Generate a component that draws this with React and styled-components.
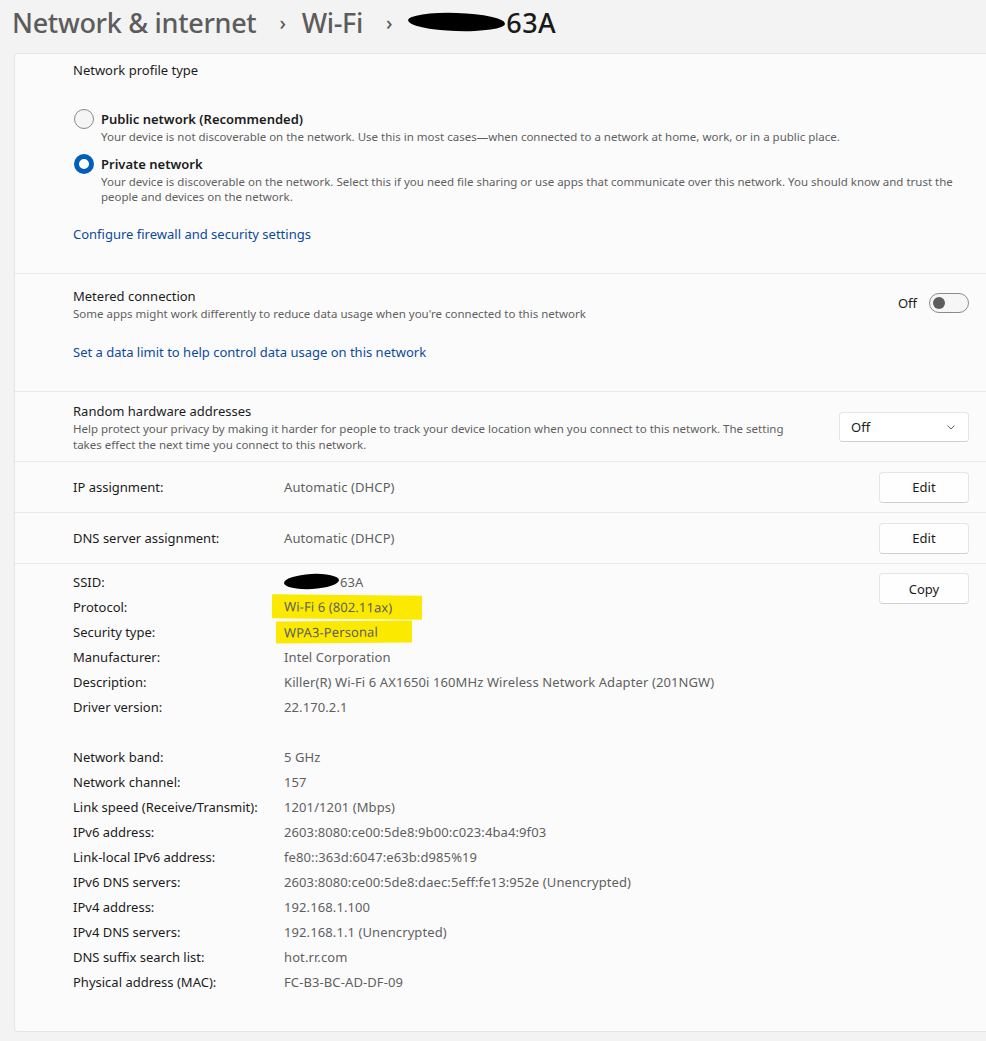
import React from 'react';
import styled, { createGlobalStyle } from 'styled-components';

const GlobalStyle = createGlobalStyle`
    html, body {
        margin: 0;
        padding: 0;
        background: #f3f3f3;
        overflow: hidden;
    }
    body {
        font-family: "Noto Sans", "Open Sans", sans-serif;
        color: #1b1b1b;
        -webkit-font-smoothing: antialiased;
    }
`;

const text = '#1b1b1b';
const muted = '#5f5f5f';
const link = '#0b4a9c';
const line = '#e8e8e8';

const Page = styled.div`
    padding-left: 14px;
    width: 1000px;
`;

const Header = styled.h1`
    display: flex;
    align-items: center;
    height: 44px;
    margin: 0 0 9px -2px;
    padding: 0;
    font-size: 27px;
    font-weight: 500;
    letter-spacing: -0.3px;
    color: #5c5c5c;
    white-space: nowrap;
`;

const Crumb = styled.span`
    color: ${p => (p.$current ? '#1a1a1a' : '#5c5c5c')};
    display: inline-flex;
    align-items: center;
    letter-spacing: ${p => (p.$current ? '0.4px' : 'inherit')};
`;

const Sep = styled.span`
    font-size: 20px;
    margin: 0 16px 0 23px;
    color: #5c5c5c;
`;

const Blot = styled.span`
    display: inline-block;
    width: ${p => p.$w}px;
    height: ${p => p.$h}px;
    background: #000;
    border-radius: 50%;
    transform: rotate(${p => p.$rot || 0}deg);
    margin-right: 1px;
`;

const Card = styled.div`
    width: 986px;
    background: #fbfbfb;
    border: 1px solid #e5e5e5;
    border-right: none;
    border-radius: 4px 0 0 4px;
`;

const Section = styled.div`
    padding: ${p => p.$pad || '0'};
    padding-left: 58px;
    padding-right: 32px;
    border-bottom: ${p => (p.$last ? 'none' : `1px solid ${line}`)};
`;

const Row = styled.div`
    display: flex;
    align-items: ${p => p.$align || 'center'};
    justify-content: space-between;
    min-height: ${p => p.$h || 0}px;
`;

const Title = styled.div`
    font-size: 13px;
    line-height: 20px;
    color: ${text};
    font-weight: ${p => (p.$bold ? 600 : 400)};
`;

const Desc = styled.div`
    font-size: 11.5px;
    line-height: 15.5px;
    color: ${muted};
    max-width: ${p => p.$max || 'none'};
`;

const Link = styled.a`
    display: block;
    font-size: 13px;
    line-height: 20px;
    color: ${link};
    text-decoration: none;
    margin-top: ${p => p.$mt}px;
`;

const RadioList = styled.div`
    display: flex;
    flex-direction: column;
    gap: 9px;
    margin-top: 29px;
`;

const RadioItem = styled.label`
    display: grid;
    grid-template-columns: 28px 1fr;
    align-items: start;
`;

const RadioDot = styled.span`
    box-sizing: border-box;
    width: 20px;
    height: 20px;
    margin-left: 1px;
    border-radius: 50%;
    background: ${p => (p.$on ? '#ffffff' : '#f5f5f5')};
    border: ${p => (p.$on ? '5px solid #005fb8' : '1px solid #8a8a8a')};
`;

const Control = styled.div`
    display: flex;
    align-items: center;
    gap: 12px;
    font-size: 13px;
    color: ${text};
`;

const Toggle = styled.span`
    box-sizing: border-box;
    display: flex;
    align-items: center;
    width: 40px;
    height: 20px;
    border: 1px solid #8a8a8a;
    border-radius: 10px;
    background: #f6f6f6;
    padding-left: 3px;
    &::after {
        content: '';
        width: 12px;
        height: 12px;
        border-radius: 50%;
        background: #5d5d5d;
    }
`;

const Select = styled.div`
    box-sizing: border-box;
    display: flex;
    align-items: center;
    justify-content: space-between;
    width: 130px;
    height: 30px;
    padding: 0 12px 0 11px;
    background: #ffffff;
    border: 1px solid #e5e5e5;
    border-bottom-color: #d0d0d0;
    border-radius: 4px;
    font-size: 13px;
    color: ${text};
    flex-shrink: 0;
`;

const Button = styled.button`
    box-sizing: border-box;
    width: 90px;
    height: 31px;
    margin-top: ${p => p.$mt || 0}px;
    background: #fefefe;
    border: 1px solid #e5e5e5;
    border-bottom-color: #d0d0d0;
    border-radius: 4px;
    font-family: inherit;
    font-size: 13px;
    color: ${text};
    flex-shrink: 0;
`;

const Prop = styled.div`
    display: grid;
    grid-template-columns: 211px 1fr;
    align-items: center;
    height: 25px;
    font-size: 13px;
`;

const PropLabel = styled.span`
    color: ${text};
`;

const PropValue = styled.span`
    color: ${muted};
    display: inline-flex;
    align-items: center;
    letter-spacing: 0.1px;
`;

const Marker = styled.span`
    background: #fbe900;
    padding: ${p => p.$pad};
    margin: ${p => p.$m};
    transform: rotate(${p => p.$rot}deg);
`;

const Chevron = () => (
    <svg width="10" height="10" viewBox="0 0 10 10">
        <path d="M1.5 3.5 L5 7 L8.5 3.5" fill="none" stroke="#5f5f5f" strokeWidth="1" />
    </svg>
);

const properties = [
    ['Manufacturer:', 'Intel Corporation'],
    ['Description:', 'Killer(R) Wi-Fi 6 AX1650i 160MHz Wireless Network Adapter (201NGW)'],
    ['Driver version:', '22.170.2.1'],
    ['', ''],
    ['Network band:', '5 GHz'],
    ['Network channel:', '157'],
    ['Link speed (Receive/Transmit):', '1201/1201 (Mbps)'],
    ['IPv6 address:', '2603:8080:ce00:5de8:9b00:c023:4ba4:9f03'],
    ['Link-local IPv6 address:', 'fe80::363d:6047:e63b:d985%19'],
    ['IPv6 DNS servers:', '2603:8080:ce00:5de8:daec:5eff:fe13:952e (Unencrypted)'],
    ['IPv4 address:', '192.168.1.100'],
    ['IPv4 DNS servers:', '192.168.1.1 (Unencrypted)'],
    ['DNS suffix search list:', 'hot.rr.com'],
    ['Physical address (MAC):', 'FC-B3-BC-AD-DF-09'],
];

const App = () => (
    <Page>
        <GlobalStyle />
        <Header>
            <Crumb>Network &amp; internet</Crumb>
            <Sep>›</Sep>
            <Crumb>Wi-Fi</Crumb>
            <Sep>›</Sep>
            <Crumb $current>
                <Blot $w={97} $h={18} $rot={2} />
                63A
            </Crumb>
        </Header>

        <Card>
            <Section $pad="6px 0 29px">
                <Title>Network profile type</Title>
                <RadioList>
                    <RadioItem>
                        <RadioDot />
                        <div>
                            <Title $bold>Public network (Recommended)</Title>
                            <Desc>
                                Your device is not discoverable on the network. Use this in most cases—when connected to a network at home, work, or in a public place.
                            </Desc>
                        </div>
                    </RadioItem>
                    <RadioItem>
                        <RadioDot $on />
                        <div>
                            <Title $bold>Private network</Title>
                            <Desc>
                                Your device is discoverable on the network. Select this if you need file sharing or use apps that communicate over this network. You should know and trust the people and devices on the network.
                            </Desc>
                        </div>
                    </RadioItem>
                </RadioList>
                <Link $mt={19}>Configure firewall and security settings</Link>
            </Section>

            <Section $pad="12px 0 29px">
                <Row>
                    <div>
                        <Title>Metered connection</Title>
                        <Desc>Some apps might work differently to reduce data usage when you're connected to this network</Desc>
                    </div>
                    <Control>
                        Off
                        <Toggle />
                    </Control>
                </Row>
                <Link $mt={21}>Set a data limit to help control data usage on this network</Link>
            </Section>

            <Section $pad="9px 0 9px">
                <Row>
                    <div>
                        <Title>Random hardware addresses</Title>
                        <Desc $max="730px">
                            Help protect your privacy by making it harder for people to track your device location when you connect to this network. The setting takes effect the next time you connect to this network.
                        </Desc>
                    </div>
                    <Select>
                        Off
                        <Chevron />
                    </Select>
                </Row>
            </Section>

            <Section>
                <Row $h={50}>
                    <Prop>
                        <PropLabel>IP assignment:</PropLabel>
                        <PropValue>Automatic (DHCP)</PropValue>
                    </Prop>
                    <Button>Edit</Button>
                </Row>
            </Section>

            <Section>
                <Row $h={50}>
                    <Prop>
                        <PropLabel>DNS server assignment:</PropLabel>
                        <PropValue>Automatic (DHCP)</PropValue>
                    </Prop>
                    <Button>Edit</Button>
                </Row>
            </Section>

            <Section $pad="5px 0 37px" $last>
                <Row $align="flex-start">
                    <div>
                        <Prop>
                            <PropLabel>SSID:</PropLabel>
                            <PropValue>
                                <Blot $w={55} $h={15} $rot={-3} />
                                63A
                            </PropValue>
                        </Prop>
                        <Prop>
                            <PropLabel>Protocol:</PropLabel>
                            <PropValue>
                                <Marker $pad="3px 30px 3px 12px" $m="0 0 0 -12px" $rot={0.6}>Wi-Fi 6 (802.11ax)</Marker>
                            </PropValue>
                        </Prop>
                        <Prop>
                            <PropLabel>Security type:</PropLabel>
                            <PropValue>
                                <Marker $pad="2px 34px 2px 8px" $m="0 0 0 -8px" $rot={-0.5}>WPA3-Personal</Marker>
                            </PropValue>
                        </Prop>
                        {properties.map(([label, value], i) => (
                            <Prop key={i}>
                                <PropLabel>{label}</PropLabel>
                                <PropValue>{value}</PropValue>
                            </Prop>
                        ))}
                    </div>
                    <Button $mt={4}>Copy</Button>
                </Row>
            </Section>
        </Card>
    </Page>
);

export default App;
